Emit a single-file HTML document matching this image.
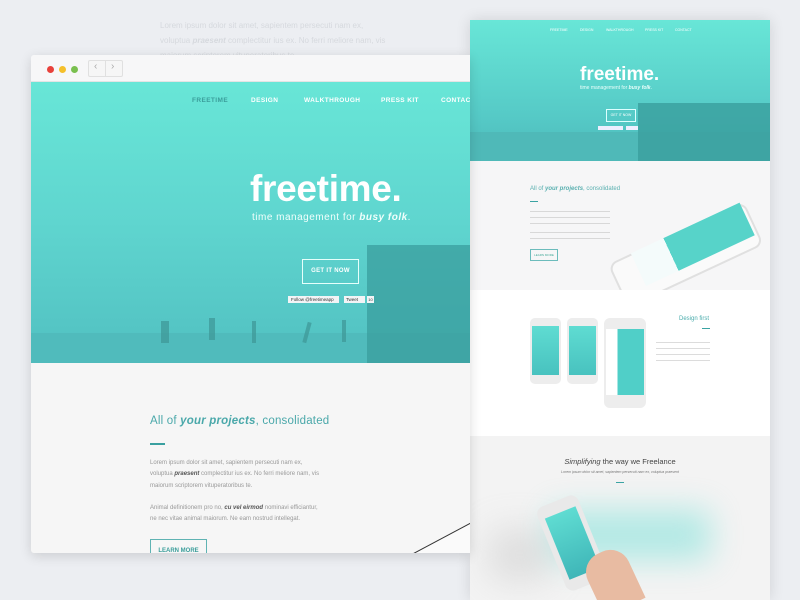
<!DOCTYPE html>
<html><head><meta charset="utf-8"><style>
*{margin:0;padding:0;box-sizing:border-box}
body{width:800px;height:600px;overflow:hidden;background:#eceef2;font-family:"Liberation Sans",sans-serif;position:relative}
.a{position:absolute;white-space:nowrap}
.bgtext{color:#d6d9de;font-size:8px;line-height:15px}
</style></head><body>
<div class="a bgtext" style="left:160px;top:18px;width:240px">Lorem ipsum dolor sit amet, sapientem persecuti nam ex,<br>voluptua <i><b>praesent</b></i> complectitur ius ex. No ferri meliore nam, vis<br>maiorum scriptorem vituperatoribus te.</div>

<!-- right page -->
<div class="a" style="left:470px;top:20px;width:300px;height:580px;background:#fff;box-shadow:0 0 14px rgba(0,0,0,.12);overflow:hidden">
 <div class="a" style="left:0;top:0;width:300px;height:141px;background:linear-gradient(#68e6d7,#55c9c6 70%,#4cb9b9)"></div>
 <div class="a" style="left:0;top:112px;width:300px;height:29px;background:#4fb9b8"></div>
 <div class="a" style="left:168px;top:83px;width:132px;height:58px;background:#3a9f9d;opacity:.8"></div>
 <div class="a" style="left:80px;top:8px;font-size:3.5px;color:#fff">FREETIME</div>
 <div class="a" style="left:110px;top:8px;font-size:3.5px;color:#fff">DESIGN</div>
 <div class="a" style="left:136px;top:8px;font-size:3.5px;color:#fff">WALKTHROUGH</div>
 <div class="a" style="left:175px;top:8px;font-size:3.5px;color:#fff">PRESS KIT</div>
 <div class="a" style="left:205px;top:8px;font-size:3.5px;color:#fff">CONTACT</div>
 <div class="a" style="left:110px;top:44px;font-size:19px;font-weight:bold;color:#fff">freetime.</div>
 <div class="a" style="left:110px;top:65px;font-size:5px;color:#eafffb">time management for <b><i>busy folk</i></b>.</div>
 <div class="a" style="left:136px;top:89px;width:30px;height:13px;border:1px solid #dff;font-size:3.5px;color:#fff;text-align:center;line-height:11px">GET IT NOW</div>
 <div class="a" style="left:128px;top:106px;width:25px;height:4px;background:#eef"></div>
 <div class="a" style="left:156px;top:106px;width:12px;height:4px;background:#eef"></div>
 <div class="a" style="left:0;top:141px;width:300px;height:129px;background:#f6f6f7"></div>
 <div class="a" style="left:60px;top:166px;font-size:6px;color:#5ab0b0">All of <b><i>your projects</i></b>, consolidated</div>
 <div class="a" style="left:60px;top:181px;width:8px;height:1px;background:#3aa3a3"></div>
 <div class="a" style="left:60px;top:188px;width:80px;height:20px;background:repeating-linear-gradient(#f6f6f7 0 3px,#d8d8d8 3px 4px,#f6f6f7 4px 6px)"></div>
 <div class="a" style="left:60px;top:210px;width:80px;height:10px;background:repeating-linear-gradient(#f6f6f7 0 2px,#d8d8d8 2px 3px,#f6f6f7 3px 6px)"></div>
 <div class="a" style="left:60px;top:229px;width:28px;height:12px;border:1px solid #6cbcbc;font-size:3px;color:#4a9;text-align:center;line-height:10px">LEARN MORE</div>
 <div class="a" style="left:158px;top:215px;width:150px;height:48px;background:#fafafa;border:2px solid #e0e0e0;border-radius:9px;transform:rotate(-25deg);transform-origin:0 100%;top:240px"></div>
 <div class="a" style="left:176px;top:230px;width:120px;height:36px;background:linear-gradient(90deg,#f4fbfb 30%,#57d3c9 30%);transform:rotate(-25deg);transform-origin:0 100%"></div>
 <div class="a" style="left:0;top:270px;width:300px;height:146px;background:#fff"></div>
 <div class="a" style="left:60px;top:298px;width:31px;height:66px;background:#ededed;border-radius:5px"></div>
 <div class="a" style="left:62px;top:306px;width:27px;height:49px;background:linear-gradient(#5fdcd2,#48c2bf)"></div>
 <div class="a" style="left:97px;top:298px;width:31px;height:66px;background:#ededed;border-radius:5px"></div>
 <div class="a" style="left:99px;top:306px;width:27px;height:49px;background:linear-gradient(#5fdcd2,#48c2bf)"></div>
 <div class="a" style="left:134px;top:298px;width:42px;height:90px;background:#ededed;border-radius:6px"></div>
 <div class="a" style="left:136px;top:309px;width:38px;height:66px;background:linear-gradient(90deg,#fff 30%,#50cfc8 30%)"></div>
 <div class="a" style="left:209px;top:296px;font-size:6px;color:#4aacac">Design first</div>
 <div class="a" style="left:232px;top:308px;width:8px;height:1px;background:#3aa3a3"></div>
 <div class="a" style="left:186px;top:318px;width:54px;height:26px;background:repeating-linear-gradient(#fff 0 4px,#dcdcdc 4px 5px,#fff 5px 6px)"></div>
 <div class="a" style="left:0;top:416px;width:300px;height:164px;background:#f3f3f3"></div>
 <div class="a" style="left:0;top:437px;width:300px;text-align:center;font-size:7.5px;color:#444"><i>Simplifying</i> the way we Freelance</div>
 <div class="a" style="left:0;top:450px;width:300px;text-align:center;font-size:3.5px;color:#777"><i>Lorem ipsum dolor sit amet, sapientem persecuti nam ex, voluptua praesent</i></div>
 <div class="a" style="left:146px;top:462px;width:8px;height:1px;background:#3aa3a3"></div>
 <div class="a" style="left:80px;top:490px;width:160px;height:50px;background:#62ddd3;filter:blur(16px);opacity:.45"></div>
 <div class="a" style="left:20px;top:510px;width:60px;height:50px;background:#bbb;filter:blur(18px);opacity:.4"></div>
 <div class="a" style="left:80px;top:478px;width:44px;height:90px;background:#e9e9e9;border-radius:8px;transform:rotate(-22deg)"></div>
 <div class="a" style="left:86px;top:490px;width:33px;height:66px;background:linear-gradient(#5fdcd2,#3fb6b8);transform:rotate(-22deg)"></div>
 <div class="a" style="left:120px;top:530px;width:45px;height:60px;background:#e8bba2;border-radius:20px 20px 0 0;transform:rotate(-25deg)"></div>
</div>

<!-- left browser -->
<div class="a" style="left:31px;top:55px;width:439px;height:498px;background:#f6f6f6;box-shadow:0 3px 12px rgba(0,0,0,.14);border-radius:3px 0 0 3px;overflow:hidden">
 <div class="a" style="left:0;top:0;width:439px;height:27px;background:#f7f7f8;border-bottom:1px solid #e4e4e4"></div>
 <div class="a" style="left:16px;top:11px;width:7px;height:7px;border-radius:50%;background:#e8413b"></div>
 <div class="a" style="left:28px;top:11px;width:7px;height:7px;border-radius:50%;background:#f5c02b"></div>
 <div class="a" style="left:40px;top:11px;width:7px;height:7px;border-radius:50%;background:#7ac04f"></div>
 <div class="a" style="left:57px;top:5px;width:35px;height:17px;border:1px solid #e0e0e0;border-radius:2px;background:#f6f6f6"></div>
 <div class="a" style="left:74px;top:5px;width:1px;height:17px;background:#e0e0e0"></div>
 <div class="a" style="left:63px;top:6px;font-size:10px;color:#aaa">‹</div>
 <div class="a" style="left:80px;top:6px;font-size:10px;color:#aaa">›</div>
 <div class="a" style="left:0;top:27px;width:439px;height:281px;background:linear-gradient(#68e6d7,#5fd5cf 50%,#51c0c1)"></div>
 <div class="a" style="left:0;top:278px;width:439px;height:30px;background:#50bbbc"></div>
 <div class="a" style="left:336px;top:190px;width:103px;height:118px;background:#3a9e9d;opacity:.75"></div>
 <div class="a" style="left:130px;top:266px;width:8px;height:22px;background:#3d9696;opacity:.7"></div>
 <div class="a" style="left:178px;top:263px;width:6px;height:22px;background:#3d9696;opacity:.7"></div>
 <div class="a" style="left:221px;top:266px;width:4px;height:22px;background:#3d9696;opacity:.7"></div>
 <div class="a" style="left:274px;top:267px;width:4px;height:21px;background:#3d9696;opacity:.7;transform:rotate(15deg)"></div>
 <div class="a" style="left:311px;top:265px;width:4px;height:22px;background:#3d9696;opacity:.7"></div>
 <div class="a" style="left:161px;top:42px;font-size:6.5px;font-weight:bold;letter-spacing:.4px;color:#3b9e9b">FREETIME</div>
 <div class="a" style="left:220px;top:42px;font-size:6.5px;font-weight:bold;letter-spacing:.4px;color:#fff">DESIGN</div>
 <div class="a" style="left:273px;top:42px;font-size:6.5px;font-weight:bold;letter-spacing:.4px;color:#fff">WALKTHROUGH</div>
 <div class="a" style="left:350px;top:42px;font-size:6.5px;font-weight:bold;letter-spacing:.4px;color:#fff">PRESS KIT</div>
 <div class="a" style="left:410px;top:42px;font-size:6.5px;font-weight:bold;letter-spacing:.4px;color:#fff">CONTACT</div>
 <div class="a" style="left:219px;top:113px;font-size:37px;font-weight:bold;color:#fff;letter-spacing:-.3px">freetime.</div>
 <div class="a" style="left:221px;top:157px;font-size:10px;color:#f0fffc;letter-spacing:.5px">time management for <b><i>busy folk</i></b>.</div>
 <div class="a" style="left:271px;top:204px;width:57px;height:25px;border:1px solid #e6fffb;font-size:6px;font-weight:bold;color:#fff;text-align:center;line-height:23px;letter-spacing:.3px">GET IT NOW</div>
 <div class="a" style="left:257px;top:241px;width:51px;height:7px;background:#f2f4f6;font-size:4.5px;color:#333;line-height:7px;padding-left:3px;overflow:hidden">Follow @freetimeapp</div>
 <div class="a" style="left:313px;top:241px;width:21px;height:7px;background:#f2f4f6;font-size:4.5px;color:#333;line-height:7px;padding-left:2px">Tweet</div>
 <div class="a" style="left:336px;top:241px;width:7px;height:7px;background:#f2f4f6;font-size:4px;color:#333;text-align:center;line-height:7px">10</div>
 <div class="a" style="left:119px;top:360px;font-size:11.5px;color:#4aa8aa;letter-spacing:.2px">All of <b><i>your projects</i></b>, consolidated</div>
 <div class="a" style="left:119px;top:388px;width:15px;height:1.5px;background:#3aa0a0"></div>
 <div class="a" style="left:119px;top:403px;font-size:6px;color:#999;line-height:11.3px">Lorem ipsum dolor sit amet, sapientem persecuti nam ex,<br>voluptua <b><i style="color:#555">praesent</i></b> complectitur ius ex. No ferri meliore nam, vis<br>maiorum scriptorem vituperatoribus te.</div>
 <div class="a" style="left:119px;top:448px;font-size:6px;color:#999;line-height:11.3px">Animal definitionem pro no, <b><i style="color:#555">cu vel eirmod</i></b> nominavi efficiantur,<br>ne nec vitae animal maiorum. Ne eam nostrud intellegat.</div>
 <div class="a" style="left:119px;top:484px;width:57px;height:20px;border:1px solid #5fb3b3;font-size:6px;font-weight:bold;color:#3b9e9b;text-align:center;line-height:22px">LEARN MORE</div>
 <div class="a" style="left:380px;top:478px;width:90px;height:40px;border-top:1px solid #333;transform:rotate(-28deg);background:#fafafa"></div>
</div>
</body></html>
